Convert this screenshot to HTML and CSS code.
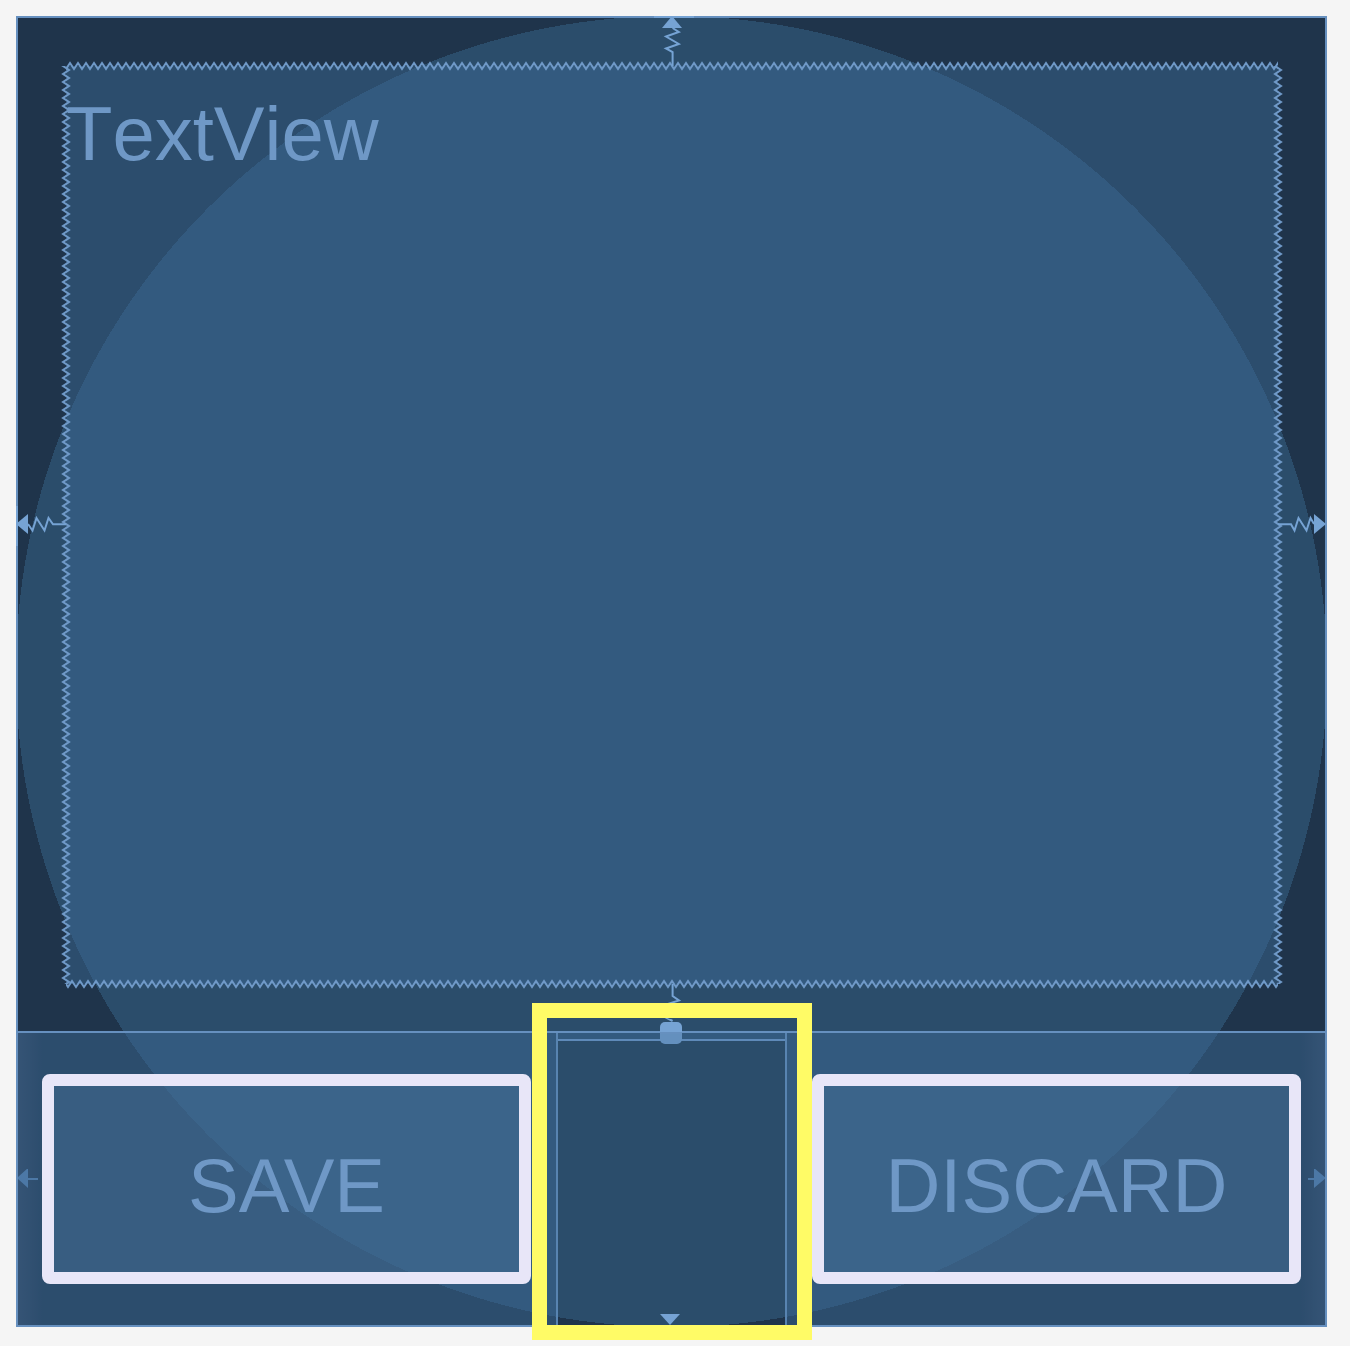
FILE: index.html
```html
<!DOCTYPE html>
<html lang="en">
<head>
<meta charset="utf-8">
<title>Layout blueprint</title>
<link rel="stylesheet" href="styles.css">
</head>
<body>
<main class="blueprint">
  <section class="stage">
    <svg class="link link-top" width="40" height="44" viewBox="0 0 40 44" aria-hidden="true">
      <path class="edge" d="M2 -1H42"/>
      <path class="wire" d="M20.6 10L26.8 14L14 18.5L26.8 26L14 30.5L20.6 34V48"/>
      <path class="tip" d="M20 -2L30 10H10Z"/>
    </svg>
    <svg class="link link-left" width="44" height="40" viewBox="0 0 44 40" aria-hidden="true">
      <path class="edge" d="M-1 1V41"/>
      <path class="wire" d="M10 19L14.5 25.5L18.5 13L26.5 25.5L30.5 13L35 19.3H48"/>
      <path class="tip" d="M-2 19L10 9V29Z"/>
    </svg>
    <p class="text-view">TextView</p>
    <svg class="link link-right" width="43" height="40" viewBox="0 0 43 40" aria-hidden="true">
      <path class="wire" d="M-4 19.3H9L12.5 25.5L16.5 13L24.5 25.5L28.5 13L32 19"/>
      <path class="tip" d="M44 19L32 9V29Z"/>
    </svg>
    <svg class="link link-bottom" width="40" height="43" viewBox="0 0 40 43" aria-hidden="true">
      <path class="wire" d="M20.6 -4V8L27 12.5L14 16.5L27 25L15 30L20.6 33"/>
    </svg>
  </section>
  <section class="actions">
    <svg class="arrow" width="24" height="20" viewBox="0 0 24 20" aria-hidden="true">
      <path d="M-1 9L10 -1V9H20V11H10V19Z"/>
    </svg>
    <button class="action" type="button">SAVE</button>
    <div class="slot"><div class="void"></div></div>
    <button class="action" type="button">DISCARD</button>
    <svg class="arrow" width="24" height="20" viewBox="0 0 24 20" aria-hidden="true">
      <path d="M25 9L13 -1V9H7V11H13V19Z"/>
    </svg>
  </section>
  <div class="highlight"></div>
  <span class="handle"></span>
  <svg class="down" width="20" height="11" viewBox="0 0 20 11" aria-hidden="true">
    <path class="tip" d="M0 0H20L10 11Z"/>
  </svg>
</main>
</body>
</html>
```
FILE: styles.css
```css
:root {
  --line: #6f99c8;
  --bright: #76a3d4;
  --tint: rgba(60, 106, 151, 0.46);
}

* {
  box-sizing: border-box;
}

body {
  margin: 0;
  padding: 16px 23px 19px 16px;
  background: #f5f5f5;
  font-family: "Liberation Sans", Arial, sans-serif;
}

.blueprint {
  position: relative;
  display: flex;
  flex-direction: column;
  aspect-ratio: 1;
  border: 2px solid #6690bf;
  background: radial-gradient(circle closest-side, #2b4d6b 100%, #1f344b 100%) border-box;
}

.stage {
  flex: 1;
  display: grid;
  grid-template-columns: 44px 1fr 43px;
  grid-template-rows: 44px 1fr 43px;
}

.link {
  overflow: visible;
  place-self: center;
  z-index: 1;
}

.link-top { grid-area: 1 / 2; }
.link-left { grid-area: 2 / 1; }
.link-right { grid-area: 2 / 3; }
.link-bottom { grid-area: 3 / 2; }

.wire,
.edge {
  fill: none;
  stroke: var(--bright);
  stroke-width: 2;
}

.tip {
  fill: var(--bright);
}

.text-view {
  grid-area: 2 / 2;
  position: relative;
  margin: 0;
  padding: 24px 0 0;
  border: 4px solid transparent;
  background: var(--tint) padding-box;
  color: #6f98c6;
  font-size: 76px;
  font-kerning: none;
  line-height: 88px;
}

/* Zigzag edges: top and bottom, then left and right */
.text-view::before,
.text-view::after {
  content: "";
  position: absolute;
}

.text-view::before {
  inset: -5px 0;
  background:
    url("data:image/svg+xml,%3Csvg xmlns='http://www.w3.org/2000/svg' width='8' height='10'%3E%3Cpath d='M-4 2L0 8L4 2L8 8L12 2' fill='none' stroke='%236f99c8' stroke-width='2'/%3E%3C/svg%3E") 0 0 / 8px 10px repeat-x,
    url("data:image/svg+xml,%3Csvg xmlns='http://www.w3.org/2000/svg' width='8' height='10'%3E%3Cpath d='M-4 2L0 8L4 2L8 8L12 2' fill='none' stroke='%236f99c8' stroke-width='2'/%3E%3C/svg%3E") 2px 100% / 8px 10px repeat-x;
}

.text-view::after {
  inset: 0 -5px;
  background:
    url("data:image/svg+xml,%3Csvg xmlns='http://www.w3.org/2000/svg' width='10' height='8'%3E%3Cpath d='M8 -4L2 0L8 4L2 8L8 12' fill='none' stroke='%236f99c8' stroke-width='2'/%3E%3C/svg%3E") 0 0 / 10px 8px repeat-y,
    url("data:image/svg+xml,%3Csvg xmlns='http://www.w3.org/2000/svg' width='10' height='8'%3E%3Cpath d='M2 -4L8 0L2 4L8 8L2 12' fill='none' stroke='%236f99c8' stroke-width='2'/%3E%3C/svg%3E") 100% 4px / 10px 8px repeat-y;
}

.actions {
  display: grid;
  grid-template-columns: 24px 1fr 281px 1fr 24px;
  overflow: hidden;
  border-top: 2px solid #6690bf;
  background:
    linear-gradient(to right, rgba(85, 95, 125, 0.3), transparent) left / 24px 100% no-repeat,
    linear-gradient(to left, rgba(85, 95, 125, 0.3), transparent) right / 24px 100% no-repeat;
}

.arrow {
  align-self: center;
  z-index: 1;
  fill: #4c78a6;
}

.action {
  z-index: 1;
  height: 210px;
  margin: 41px 0;
  padding: 12px 0 0;
  border: 12px solid #e8e6f8;
  border-radius: 8px;
  background: rgba(67, 110, 150, 0.5) padding-box;
  color: #6f98c6;
  font: inherit;
  font-size: 76px;
}

.slot {
  display: flex;
  margin: 0 25px;
  padding-top: 6px;
  border: solid var(--line);
  border-width: 0 2px;
}

/* The spread shadow tints the whole bar except this opening */
.void {
  flex: 1;
  border-top: 2px solid #5f8ab9;
  box-shadow: 0 0 0 100vmax var(--tint);
}

.highlight {
  position: absolute;
  z-index: 2;
  bottom: -15px;
  left: calc(50% - 140px);
  width: 280px;
  height: 337px;
  border: 15px solid #fffb66;
}

.handle {
  position: absolute;
  z-index: 3;
  bottom: 281px;
  left: calc(50% - 12px);
  width: 22px;
  height: 22px;
  border-radius: 5px;
  background: linear-gradient(#76a3d4 10px, #6690bf 10px, #6690bf 12px, #6490be 12px);
}

.down {
  position: absolute;
  z-index: 3;
  bottom: 0;
  left: calc(50% - 12px);
}
```
